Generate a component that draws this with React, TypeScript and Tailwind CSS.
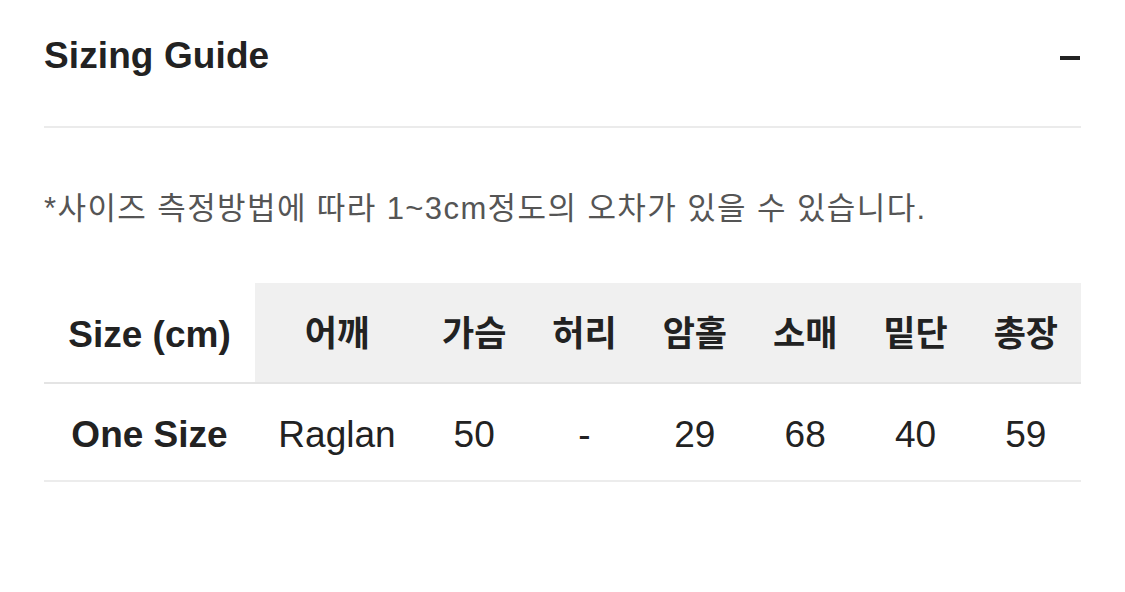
import React from "react";

const headers = ["어깨", "가슴", "허리", "암홀", "소매", "밑단", "총장"];
const values = ["Raglan", "50", "-", "29", "68", "40", "59"];

export default function App() {
  return (
    <div
      className="w-[1125px] h-[592px] bg-white text-[#222]"
      style={{ fontFamily: '"Liberation Sans", Arial, "Noto Sans CJK KR", sans-serif' }}
    >
      <div className="px-[44px]">
        <div className="flex items-center justify-between h-[128px] pb-[14px] border-b-2 border-[#ebebeb]">
          <div className="text-[37px] font-bold text-[#222] tracking-[0.1px]">Sizing Guide</div>
          <div className="w-[20px] h-[4px] bg-[#222] mr-[1px] mt-[4px]" />
        </div>
        <div className="pt-[61px] text-[31px] leading-[40px] text-[#555] tracking-[1.4px]">
          *사이즈 측정방법에 따라 1~3cm정도의 오차가 있을 수 있습니다.
        </div>
        <div className="mt-[54px] grid grid-cols-[211px_164px_repeat(6,1fr)]">
          <div className="h-[101px] pt-[4px] flex items-center justify-center text-[37px] font-bold border-b-2 border-[#e4e4e4]">
            Size (cm)
          </div>
          {headers.map((h) => (
            <div
              key={h}
              className="h-[101px] pt-[4px] flex items-center justify-center bg-[#f0f0f0] text-[35px] font-bold border-b-2 border-[#e4e4e4]"
            >
              {h}
            </div>
          ))}
          <div className="h-[98px] pt-[5px] flex items-center justify-center text-[37px] font-bold border-b-2 border-[#ececec]">
            One Size
          </div>
          {values.map((v, i) => (
            <div
              key={i}
              className="h-[98px] pt-[5px] flex items-center justify-center text-[37px] border-b-2 border-[#ececec]"
            >
              {v}
            </div>
          ))}
        </div>
      </div>
    </div>
  );
}
